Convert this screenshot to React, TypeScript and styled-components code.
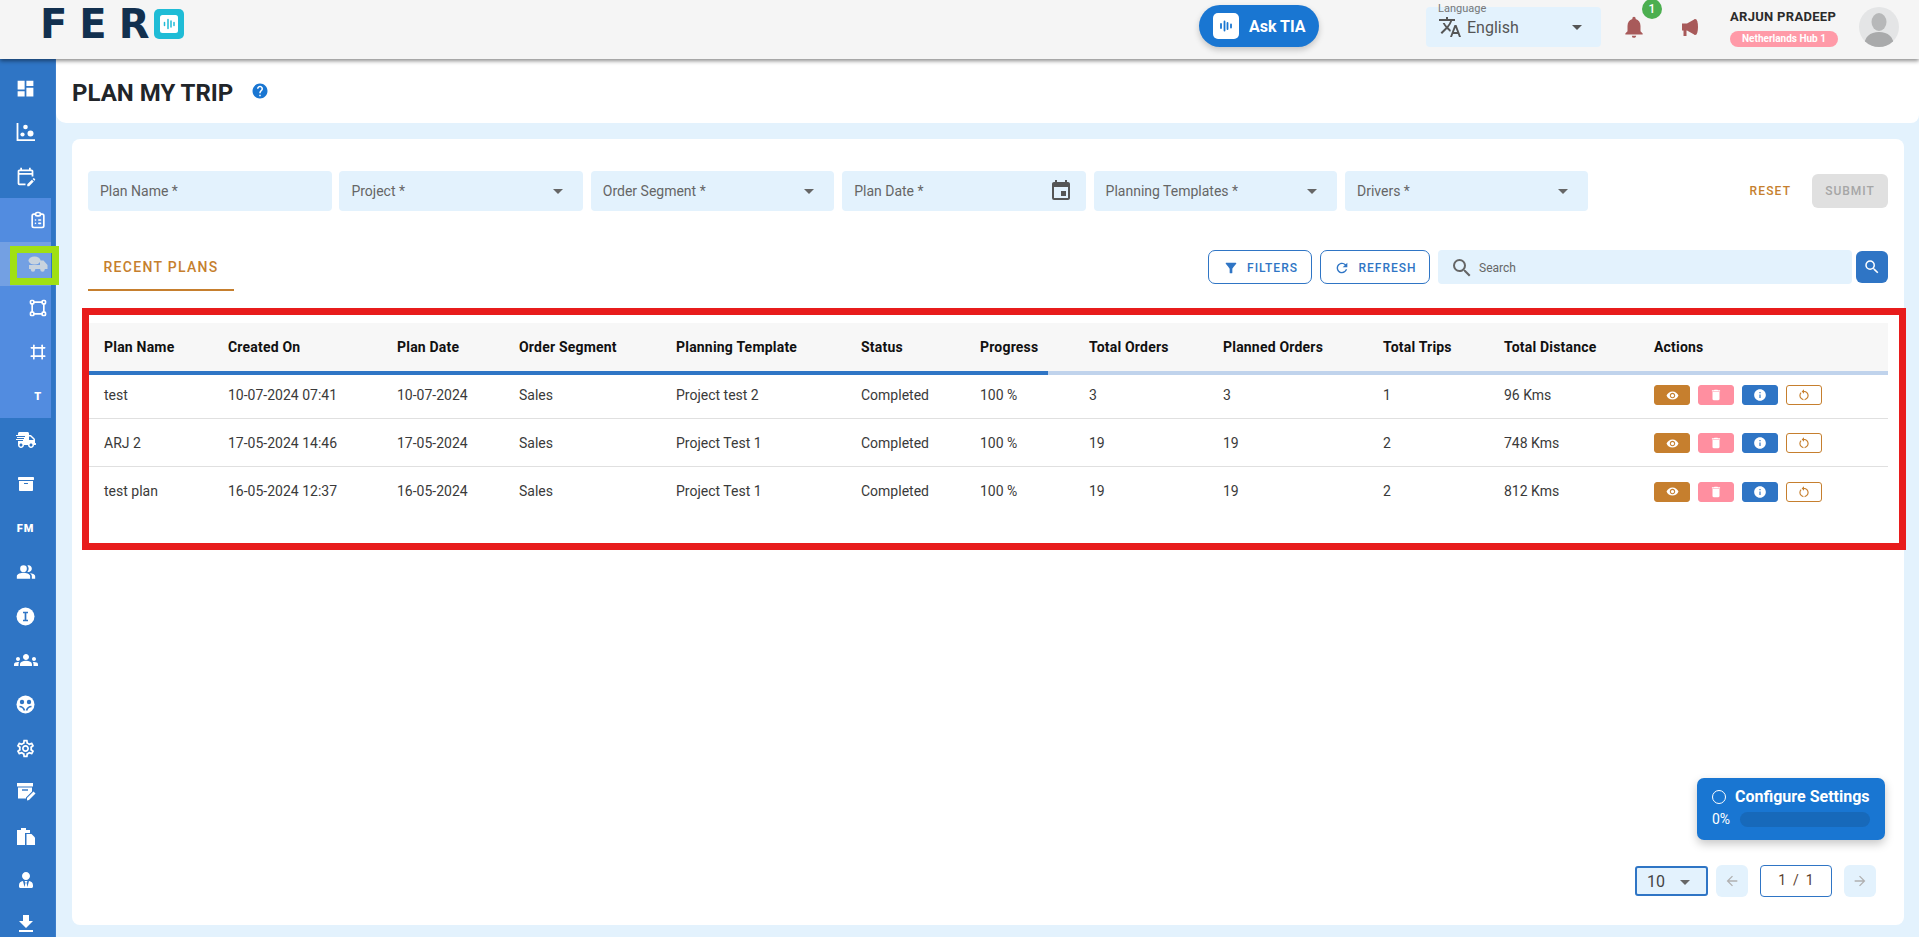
import React from 'react';
import styled, { createGlobalStyle } from 'styled-components';
import {
  MdDashboard, MdOutlineEditCalendar, MdPeopleAlt, MdGroups, MdOutlineSettings, MdFileDownload,
  MdArrowDropDown, MdTranslate, MdNotifications, MdHelp, MdEvent, MdFilterAlt,
  MdRefresh, MdSearch, MdVisibility, MdDelete, MdInfo, MdArrowBack, MdArrowForward, MdRestartAlt,
} from 'react-icons/md';
import { TbClipboardList, TbVector, TbFrame } from 'react-icons/tb';
import { FaShippingFast, FaArchive, FaUserTie } from 'react-icons/fa';

const Global = createGlobalStyle`
  html, body { margin: 0; padding: 0; height: 100%; overflow: hidden; }
  body { font-family: Roboto, "Liberation Sans", sans-serif; color: #333; }
  * { box-sizing: border-box; }
`;

const Page = styled.div`
  display: flex;
  flex-direction: column;
  height: 937px;
  overflow: hidden;
`;

const TopBar = styled.header`
  display: flex;
  align-items: center;
  height: 59px;
  flex: none;
  background: #f5f5f5;
  box-shadow: 0 2px 4px rgba(0, 0, 0, 0.45);
  padding-left: 40px;
  position: relative;
  z-index: 3;
`;

const Logo = styled.div`
  display: flex;
  align-items: center;
  margin-top: -11px;
`;

const LogoText = styled.span`
  width: 114px;
  font-family: "DejaVu Sans", sans-serif;
  font-weight: 700;
  font-size: 40px;
  line-height: 30px;
  letter-spacing: 12px;
  color: #12304f;
`;

const AskButton = styled.div`
  display: flex;
  align-items: center;
  gap: 10px;
  width: 120px;
  height: 42px;
  margin-left: 1015px;
  margin-top: -7px;
  padding-left: 14px;
  border-radius: 21px;
  background: #1976d2;
  color: #fff;
  font-size: 16px;
  font-weight: 700;
  box-shadow: 0 3px 6px rgba(0, 0, 0, 0.2);
`;

const LangSelect = styled.div`
  position: relative;
  display: flex;
  align-items: center;
  width: 175px;
  height: 40px;
  margin-left: 107px;
  margin-top: -5px;
  padding: 0 12px 0 12px;
  border-radius: 4px;
  background: #e3f2fd;
  color: #555;
  font-size: 16px;
`;

const LangLabel = styled.span`
  position: absolute;
  left: 12px;
  top: -5px;
  font-size: 11px;
  color: #777;
`;

const LangValue = styled.span`
  margin-left: 5px;
  flex: 1;
`;

const IconSlot = styled.div<{ $gap: number }>`
  position: relative;
  display: flex;
  margin-left: ${(p) => p.$gap}px;
  margin-top: -5px;
  color: #a85a5a;
`;

const Badge = styled.span`
  position: absolute;
  top: -15px;
  right: -15px;
  width: 20px;
  height: 20px;
  border-radius: 50%;
  background: #4caf50;
  color: #fff;
  font-size: 12px;
  font-weight: 500;
  text-align: center;
  line-height: 20px;
`;

const UserBlock = styled.div`
  display: flex;
  flex-direction: column;
  align-items: flex-start;
  gap: 7px;
  width: 129px;
  margin-left: 27px;
  margin-top: -4px;
`;

const UserName = styled.span`
  font-size: 13px;
  font-weight: 700;
  letter-spacing: 0.3px;
  line-height: 15px;
  color: #2b2b2b;
`;

const HubChip = styled.span`
  width: 108px;
  height: 16px;
  border-radius: 8px;
  background: #ff9aa8;
  color: #fff;
  font-size: 10px;
  font-weight: 700;
  line-height: 16px;
  text-align: center;
`;

const Avatar = styled.div`
  width: 40px;
  height: 40px;
  margin-top: -5px;
  border-radius: 50%;
  overflow: hidden;
  display: flex;
`;

const Body = styled.div`
  display: flex;
  flex: 1;
  min-height: 0;
`;

const Sidebar = styled.nav`
  position: relative;
  z-index: 2;
  width: 56px;
  flex: none;
  padding-top: 7px;
  background: #2f75c5;
  border-right: 1px solid #3c7ecb;
`;

const SubMenu = styled.div`
  width: 51px;
  background: #528ce0;
`;

const NavItem = styled.div<{ $sub?: boolean; $active?: boolean }>`
  position: relative;
  display: flex;
  align-items: center;
  justify-content: center;
  width: 51px;
  height: 44px;
  padding-left: ${(p) => (p.$sub ? 25 : 0)}px;
  color: ${(p) => (p.$active ? '#c9d3de' : '#fff')};
  background: ${(p) => (p.$active ? '#73a0e3' : 'transparent')};
`;

const NavText = styled.span`
  font-size: 11px;
  font-weight: 900;
  letter-spacing: 0.8px;
  color: #fff;
`;

const Highlight = styled.span`
  position: absolute;
  left: 10px;
  top: 4px;
  width: 49px;
  height: 39px;
  border: 7px solid #a0e013;
`;

const Main = styled.main`
  display: flex;
  flex-direction: column;
  flex: 1;
  min-width: 0;
  background: #e3f2fd;
`;

const TitleBar = styled.div`
  display: flex;
  align-items: center;
  gap: 18px;
  height: 64px;
  flex: none;
  padding: 3px 0 0 16px;
  background: #fff;
  border-radius: 0 0 8px 10px;
`;

const Title = styled.h1`
  margin: 0;
  font-size: 24px;
  font-weight: 700;
  color: #212529;
`;

const HelpIcon = styled.span`
  display: flex;
  color: #1976d2;
  margin-top: -3px;
`;

const Card = styled.section`
  position: relative;
  display: flex;
  flex-direction: column;
  flex: 1;
  margin: 16px 15px 12px 16px;
  padding: 32px 16px 28px;
  background: #fff;
  border-radius: 8px;
`;

const FormRow = styled.div`
  display: flex;
  align-items: center;
  gap: 7.9px;
`;

const Field = styled.div`
  display: flex;
  align-items: center;
  justify-content: space-between;
  width: 243.5px;
  height: 40px;
  padding: 0 13px 0 12px;
  border-radius: 4px;
  background: #e3f2fd;
  color: #666;
  font-size: 14px;
`;

const ResetButton = styled.span`
  margin-left: auto;
  margin-right: 13px;
  font-size: 12px;
  font-weight: 500;
  letter-spacing: 1.15px;
  color: #c67f2e;
`;

const SubmitButton = styled.span`
  width: 76px;
  height: 34px;
  border-radius: 6px;
  background: #e0e0e0;
  color: #a6a6a6;
  font-size: 12px;
  font-weight: 500;
  letter-spacing: 1px;
  line-height: 34px;
  text-align: center;
`;

const TabRow = styled.div`
  display: flex;
  margin-top: 32px;
  height: 48px;
`;

const Tab = styled.div`
  width: 146px;
  height: 48px;
  border-bottom: 2px solid #c67f2e;
  color: #c67f2e;
  font-size: 14px;
  font-weight: 500;
  letter-spacing: 1.3px;
  line-height: 49px;
  text-align: center;
`;

const Controls = styled.div`
  display: flex;
  align-items: center;
  gap: 8px;
  height: 34px;
  margin: 7px 0 0 auto;
`;

const OutlineButton = styled.div<{ $width: number }>`
  display: flex;
  align-items: center;
  justify-content: center;
  gap: 8px;
  width: ${(p) => p.$width}px;
  height: 34px;
  padding: 1px 0 0 1px;
  border: 1px solid #2f75c5;
  border-radius: 7px;
  color: #2f75c5;
  font-size: 12px;
  font-weight: 500;
  letter-spacing: 1px;
`;

const SearchBox = styled.div`
  display: flex;
  align-items: center;
  gap: 5px;
  width: 414px;
  height: 34px;
  padding: 1px 0 0 12px;
  border-radius: 4px;
  background: #e3f2fd;
  color: #666;
  font-size: 12px;
`;

const SearchButton = styled.div`
  display: flex;
  align-items: center;
  justify-content: center;
  width: 32px;
  height: 32px;
  margin-left: -4px;
  border-radius: 6px;
  background: #2f75c5;
  color: #fff;
`;

const TableFrame = styled.div`
  margin: 17px -18px 0 -6px;
  height: 242px;
  padding: 8px 11px 0 0;
  border: 7px solid #e81c1c;
`;

const cols = '124px 169px 122px 157px 185px 119px 109px 134px 160px 121px 150px 1fr';

const HeadRow = styled.div`
  display: grid;
  grid-template-columns: ${cols};
  align-items: center;
  height: 48px;
  padding-left: 15px;
  background: #f7f7f7;
  color: #111;
  font-size: 14px;
  font-weight: 700;
  letter-spacing: 0.2px;
`;

const RowsWrap = styled.div`
  position: relative;
`;

const ProgressTrack = styled.div`
  position: absolute;
  top: 0;
  left: 0;
  right: 0;
  height: 4px;
  background: #c0d3ec;
`;

const ProgressFill = styled.div<{ $value: number }>`
  width: ${(p) => p.$value}%;
  height: 100%;
  background: #2f75c5;
`;

const Row = styled.div`
  display: grid;
  grid-template-columns: ${cols};
  align-items: center;
  height: 48px;
  padding-left: 15px;
  border-bottom: 1px solid #e0e0e0;
  font-size: 14px;
  color: #3a3a3a;

  &:last-child {
    border-bottom: none;
  }
`;

const Actions = styled.div`
  display: flex;
  gap: 8px;
  margin-top: 1px;
`;

const ActionButton = styled.span<{ $bg: string; $fg?: string; $outline?: boolean }>`
  display: flex;
  align-items: center;
  justify-content: center;
  width: 36px;
  height: 20px;
  border-radius: 3px;
  background: ${(p) => (p.$outline ? '#fff' : p.$bg)};
  border: 1px solid ${(p) => p.$bg};
  color: ${(p) => p.$fg || '#fff'};
`;

const ConfigPanel = styled.div`
  position: absolute;
  right: 19px;
  bottom: 85px;
  width: 188px;
  height: 62px;
  padding: 10px 15px;
  border-radius: 7px;
  background: #1976d2;
  color: #fff;
  box-shadow: 0 4px 10px rgba(0, 0, 0, 0.22);
`;

const ConfigTitle = styled.div`
  display: flex;
  align-items: center;
  gap: 9px;
  font-size: 16px;
  font-weight: 700;
  line-height: 18px;
`;

const RingIcon = styled.span`
  width: 14px;
  height: 14px;
  border: 1.5px solid #fff;
  border-radius: 50%;
`;

const ConfigProgress = styled.div`
  display: flex;
  align-items: center;
  gap: 10px;
  margin-top: 5px;
  font-size: 14px;
`;

const ConfigBar = styled.div`
  flex: 1;
  height: 15px;
  border-radius: 8px;
  background: #1769ba;
`;

const Pagination = styled.div`
  display: flex;
  align-items: center;
  justify-content: flex-end;
  margin-top: auto;
  padding-right: 12px;
`;

const PageSize = styled.div`
  display: flex;
  align-items: center;
  gap: 8px;
  width: 73px;
  height: 30px;
  padding: 1px 0 0 10px;
  border: 2px solid #2f75c5;
  border-radius: 3px;
  background: #e3f2fd;
  font-size: 16px;
  color: #444;
`;

const PageArrow = styled.div<{ $gap: number }>`
  display: flex;
  align-items: center;
  justify-content: center;
  width: 32px;
  height: 32px;
  margin-left: ${(p) => p.$gap}px;
  border-radius: 6px;
  background: #e3f2fd;
  color: #b0b0b0;
`;

const PageInput = styled.div`
  width: 72px;
  height: 32px;
  margin-left: 12px;
  border: 1px solid #2f75c5;
  border-radius: 4px;
  font-size: 14px;
  line-height: 28px;
  text-align: center;
  word-spacing: 3.5px;
  color: #5a4030;
`;

const TiaGlyph = ({ size, bg, fg, radius }: { size: number; bg: string; fg: string; radius: number }) => (
  <svg width={size} height={size} viewBox="0 0 26 26">
    <rect width="26" height="26" rx={radius} fill={bg} />
    <path d="M8 11v4M11.5 8.5v9M14.5 10v6M18 11.5v3" stroke={fg} strokeWidth="1.8" strokeLinecap="round" />
  </svg>
);

const LogoMark = () => (
  <svg width="30" height="30" viewBox="0 0 30 30">
    <rect width="30" height="30" rx="5" fill="#1fbcd6" />
    <rect x="6" y="6" width="18" height="18" rx="2.5" fill="#fff" />
    <path d="M10.5 13.5v3M14 10.5v9M17 12v6M20 13.5v3" stroke="#1fbcd6" strokeWidth="1.5" strokeLinecap="round" />
  </svg>
);

const MegaphoneIcon = () => (
  <svg width="26" height="26" viewBox="0 0 26 26" fill="currentColor">
    <path d="M5 9.5h5l8-4.5v16l-8-4.5H9.5v5.5H6.5V16.5H5z" />
    <ellipse cx="18.5" cy="13" rx="2.5" ry="8" />
  </svg>
);

const AvatarArt = () => (
  <svg width="40" height="40" viewBox="0 0 40 40">
    <rect width="40" height="40" fill="#e4e5e6" />
    <ellipse cx="20" cy="15" rx="7.5" ry="9" fill="#b7b8b9" />
    <path d="M5 40c0-10 6-15 15-15s15 5 15 15z" fill="#a9aaab" />
  </svg>
);

const ScatterIcon = () => (
  <svg width="20" height="20" viewBox="0 0 20 20" fill="currentColor">
    <path d="M1.5 1v17.2h17.5" fill="none" stroke="currentColor" strokeWidth="1.8" />
    <circle cx="6.5" cy="12.5" r="2.1" />
    <circle cx="9.5" cy="5" r="2.3" />
    <circle cx="14.5" cy="11.5" r="3" />
  </svg>
);

const MixerIcon = () => (
  <svg width="20" height="20" viewBox="0 0 20 20" fill="currentColor">
    <ellipse cx="6.5" cy="6.5" rx="6" ry="4" />
    <path d="M1 11h11V6.5h3.5l4 4.5v4H1z" />
    <circle cx="5" cy="15.5" r="2.2" />
    <circle cx="14.5" cy="15.5" r="2.2" />
  </svg>
);

const InfoIIcon = () => (
  <svg width="19" height="19" viewBox="0 0 19 19">
    <circle cx="9.5" cy="9.5" r="9" fill="currentColor" />
    <path d="M7 5.5h5M7 13.5h5M9.5 5.5v8" stroke="#2f75c5" strokeWidth="1.7" />
  </svg>
);

const WheelIcon = () => (
  <svg width="19" height="19" viewBox="0 0 19 19">
    <circle cx="9.5" cy="9.5" r="9" fill="currentColor" />
    <circle cx="6" cy="7" r="2.2" fill="#2f75c5" />
    <circle cx="13" cy="7" r="2.2" fill="#2f75c5" />
    <path d="M3.5 11.5c2 0 4 1 5 4M15.5 11.5c-2 0-4 1-5 4" stroke="#2f75c5" strokeWidth="1.7" fill="none" />
  </svg>
);

const NoteEditIcon = () => (
  <svg width="20" height="20" viewBox="0 0 20 20" fill="currentColor">
    <rect x="1" y="1" width="16" height="3.5" />
    <path d="M2 5.5h14v4l-6 6v1H2z" />
    <path d="M11 18.5v-2.5l6.5-6.5 2 2-6.5 6.5z" />
    <path d="M6 8h6" stroke="#2f75c5" strokeWidth="1.4" />
  </svg>
);

const ClipCopyIcon = () => (
  <svg width="20" height="20" viewBox="0 0 20 20" fill="currentColor">
    <path d="M1 4h4V2h5v2h4v3H9v12H1z" />
    <path d="M10.5 8h5l3.5 3.5V19h-8.5z" />
  </svg>
);

const renderSub = (active: boolean, node: React.ReactNode, key: string) => (
  <NavItem key={key} $sub $active={active}>
    {node}
    {active && <Highlight />}
  </NavItem>
);

type PlanRow = {
  name: string;
  created: string;
  date: string;
  template: string;
  total: number;
  trips: number;
  distance: string;
};

const plans: PlanRow[] = [
  { name: 'test', created: '10-07-2024 07:41', date: '10-07-2024', template: 'Project test 2', total: 3, trips: 1, distance: '96 Kms' },
  { name: 'ARJ 2', created: '17-05-2024 14:46', date: '17-05-2024', template: 'Project Test 1', total: 19, trips: 2, distance: '748 Kms' },
  { name: 'test plan', created: '16-05-2024 12:37', date: '16-05-2024', template: 'Project Test 1', total: 19, trips: 2, distance: '812 Kms' },
];

const headers = ['Plan Name', 'Created On', 'Plan Date', 'Order Segment', 'Planning Template', 'Status', 'Progress', 'Total Orders', 'Planned Orders', 'Total Trips', 'Total Distance', 'Actions'];

export default function App() {
  return (
    <Page>
      <Global />
      <TopBar>
        <Logo>
          <LogoText>FER</LogoText>
          <LogoMark />
        </Logo>
        <AskButton>
          <TiaGlyph size={26} bg="#fff" fg="#1976d2" radius={5} />
          Ask TIA
        </AskButton>
        <LangSelect>
          <LangLabel>Language</LangLabel>
          <MdTranslate size={24} />
          <LangValue>English</LangValue>
          <MdArrowDropDown size={24} />
        </LangSelect>
        <IconSlot $gap={20}>
          <MdNotifications size={26} />
          <Badge>1</Badge>
        </IconSlot>
        <IconSlot $gap={30}>
          <MegaphoneIcon />
        </IconSlot>
        <UserBlock>
          <UserName>ARJUN PRADEEP</UserName>
          <HubChip>Netherlands Hub 1</HubChip>
        </UserBlock>
        <Avatar>
          <AvatarArt />
        </Avatar>
      </TopBar>
      <Body>
        <Sidebar>
          <NavItem><MdDashboard size={21} /></NavItem>
          <NavItem><ScatterIcon /></NavItem>
          <NavItem><MdOutlineEditCalendar size={21} /></NavItem>
          <SubMenu>
            {renderSub(false, <TbClipboardList size={20} />, 'plan')}
            {renderSub(true, <MixerIcon />, 'trip')}
            {renderSub(false, <TbVector size={20} />, 'vector')}
            {renderSub(false, <TbFrame size={20} />, 'frame')}
            {renderSub(false, <NavText>T</NavText>, 'text')}
          </SubMenu>
          <NavItem><FaShippingFast size={20} /></NavItem>
          <NavItem><FaArchive size={16} /></NavItem>
          <NavItem><NavText>FM</NavText></NavItem>
          <NavItem><MdPeopleAlt size={20} /></NavItem>
          <NavItem><InfoIIcon /></NavItem>
          <NavItem><MdGroups size={24} /></NavItem>
          <NavItem><WheelIcon /></NavItem>
          <NavItem><MdOutlineSettings size={21} /></NavItem>
          <NavItem><NoteEditIcon /></NavItem>
          <NavItem><ClipCopyIcon /></NavItem>
          <NavItem><FaUserTie size={16} /></NavItem>
          <NavItem><MdFileDownload size={24} /></NavItem>
        </Sidebar>
        <Main>
          <TitleBar>
            <Title>PLAN MY TRIP</Title>
            <HelpIcon><MdHelp size={18} /></HelpIcon>
          </TitleBar>
          <Card>
            <FormRow>
              <Field>Plan Name *</Field>
              <Field>Project *<MdArrowDropDown size={24} /></Field>
              <Field>Order Segment *<MdArrowDropDown size={24} /></Field>
              <Field>Plan Date *<MdEvent size={24} color="#555" /></Field>
              <Field>Planning Templates *<MdArrowDropDown size={24} /></Field>
              <Field>Drivers *<MdArrowDropDown size={24} /></Field>
              <ResetButton>RESET</ResetButton>
              <SubmitButton>SUBMIT</SubmitButton>
            </FormRow>
            <TabRow>
              <Tab>RECENT PLANS</Tab>
              <Controls>
                <OutlineButton $width={104}><MdFilterAlt size={16} />FILTERS</OutlineButton>
                <OutlineButton $width={110}><MdRefresh size={16} />REFRESH</OutlineButton>
                <SearchBox><MdSearch size={24} />Search</SearchBox>
                <SearchButton><MdSearch size={18} /></SearchButton>
              </Controls>
            </TabRow>
            <TableFrame>
              <HeadRow>
                {headers.map((h) => <span key={h}>{h}</span>)}
              </HeadRow>
              <RowsWrap>
                <ProgressTrack><ProgressFill $value={53.3} /></ProgressTrack>
                {plans.map((p) => (
                  <Row key={p.name}>
                    <span>{p.name}</span>
                    <span>{p.created}</span>
                    <span>{p.date}</span>
                    <span>Sales</span>
                    <span>{p.template}</span>
                    <span>Completed</span>
                    <span>100 %</span>
                    <span>{p.total}</span>
                    <span>{p.total}</span>
                    <span>{p.trips}</span>
                    <span>{p.distance}</span>
                    <Actions>
                      <ActionButton $bg="#c67f2e"><MdVisibility size={13} /></ActionButton>
                      <ActionButton $bg="#ff8fa0"><MdDelete size={14} /></ActionButton>
                      <ActionButton $bg="#2f75c5"><MdInfo size={14} /></ActionButton>
                      <ActionButton $bg="#c67f2e" $fg="#c67f2e" $outline><MdRestartAlt size={14} /></ActionButton>
                    </Actions>
                  </Row>
                ))}
              </RowsWrap>
            </TableFrame>
            <ConfigPanel>
              <ConfigTitle><RingIcon />Configure Settings</ConfigTitle>
              <ConfigProgress>0%<ConfigBar /></ConfigProgress>
            </ConfigPanel>
            <Pagination>
              <PageSize>10<MdArrowDropDown size={24} color="#666" /></PageSize>
              <PageArrow $gap={8}><MdArrowBack size={16} /></PageArrow>
              <PageInput>1 / 1</PageInput>
              <PageArrow $gap={12}><MdArrowForward size={16} /></PageArrow>
            </Pagination>
          </Card>
        </Main>
      </Body>
    </Page>
  );
}
